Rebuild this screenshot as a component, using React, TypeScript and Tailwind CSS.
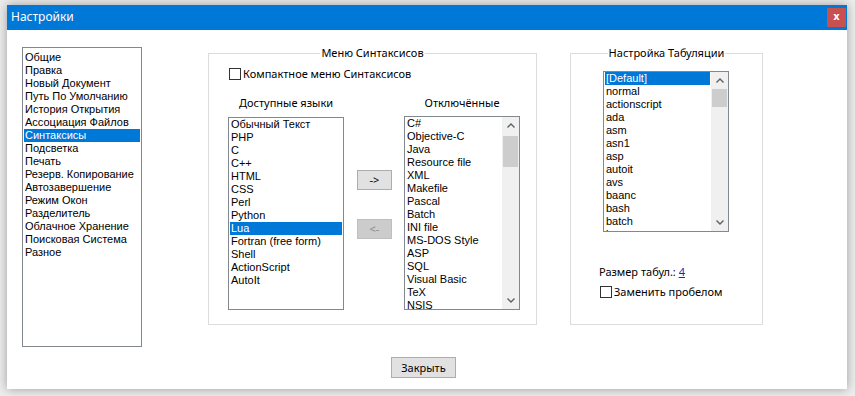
import React from "react";

const UI = "font-['Noto_Sans',sans-serif] text-[11px] leading-[16px] text-black";
const LIST = "font-['Liberation_Sans',Arial,sans-serif] text-[11px] leading-[13px] text-black";

const categories = [
  "Общие",
  "Правка",
  "Новый Документ",
  "Путь По Умолчанию",
  "История Открытия",
  "Ассоциация Файлов",
  "Синтаксисы",
  "Подсветка",
  "Печать",
  "Резерв. Копирование",
  "Автозавершение",
  "Режим Окон",
  "Разделитель",
  "Облачное Хранение",
  "Поисковая Система",
  "Разное",
];

const available = [
  "Обычный Текст",
  "PHP",
  "C",
  "C++",
  "HTML",
  "CSS",
  "Perl",
  "Python",
  "Lua",
  "Fortran (free form)",
  "Shell",
  "ActionScript",
  "AutoIt",
];

const disabled = [
  "C#",
  "Objective-C",
  "Java",
  "Resource file",
  "XML",
  "Makefile",
  "Pascal",
  "Batch",
  "INI file",
  "MS-DOS Style",
  "ASP",
  "SQL",
  "Visual Basic",
  "TeX",
  "NSIS",
];

const tabLexers = [
  "[Default]",
  "normal",
  "actionscript",
  "ada",
  "asm",
  "asn1",
  "asp",
  "autoit",
  "avs",
  "baanc",
  "bash",
  "batch",
  "bc",
];

function Chevron({ down }: { down?: boolean }) {
  return (
    <svg width="8" height="5" viewBox="0 0 8 5" className={down ? "rotate-180" : ""}>
      <polyline points="0.5,4.5 4,1 7.5,4.5" fill="none" stroke="#606060" strokeWidth="1.4" />
    </svg>
  );
}

function ScrollBar({ thumbTop, thumbHeight }: { thumbTop: number; thumbHeight: number }) {
  return (
    <div className="w-[17px] shrink-0 bg-[#f0f0f0] flex flex-col">
      <div className="h-[17px] flex items-center justify-center">
        <Chevron />
      </div>
      <div className="flex-1 px-[1px]">
        <div className="bg-[#cdcdcd]" style={{ marginTop: thumbTop, height: thumbHeight }} />
      </div>
      <div className="h-[17px] flex items-center justify-center">
        <Chevron down />
      </div>
    </div>
  );
}

function ListBox({
  items,
  selected,
  className,
  padTop = 0,
  scroll,
}: {
  items: string[];
  selected?: number;
  className: string;
  padTop?: number;
  scroll?: { top: number; height: number };
}) {
  return (
    <div className={`border border-[#828790] bg-white flex overflow-hidden ${className}`}>
      <div className={`flex-1 overflow-hidden px-[1px] ${LIST}`} style={{ paddingTop: padTop }}>
        {items.map((it, i) => (
          <div
            key={it}
            className={`h-[13px] px-[1px] whitespace-nowrap ${i === selected ? "bg-[#0078d7] text-white" : ""}`}
          >
            {it}
          </div>
        ))}
      </div>
      {scroll && <ScrollBar thumbTop={scroll.top} thumbHeight={scroll.height} />}
    </div>
  );
}

function CheckBox({ label }: { label: string }) {
  return (
    <div className={`flex items-center gap-[2px] ${UI}`}>
      <div className="w-[12px] h-[12px] border border-[#333333] bg-white" />
      <span>{label}</span>
    </div>
  );
}

function PushButton({ label, disabled }: { label: string; disabled?: boolean }) {
  return (
    <div
      className={`h-[20px] w-[35px] flex items-center justify-center border ${UI} ${
        disabled ? "bg-[#cccccc] border-[#bfbfbf] !text-[#8a8a8a]" : "bg-[#e1e1e1] border-[#adadad]"
      }`}
    >
      {label}
    </div>
  );
}

export default function App() {
  return (
    <div className="min-h-screen w-full bg-[#ededed] pl-[7px] pt-[5px]">
      <div className="w-[840px] h-[384px] bg-white flex flex-col shadow-[0_0_10px_rgba(0,0,0,0.35)]">
        {/* title bar */}
        <div className="h-[25px] bg-[#0078d7] flex items-start justify-between">
          <span className="font-['Noto_Sans',sans-serif] text-[12px] leading-[16px] text-white ml-[4px] mt-[4px]">
            Настройки
          </span>
          <div className="w-[19px] h-[19px] mt-[3px] mr-[1px] bg-[#c75050] flex items-center justify-center font-['DejaVu_Sans',sans-serif] text-[10px] font-bold leading-none text-white pb-[2px]">
            x
          </div>
        </div>

        <div className="flex items-start pl-[15px] pt-[17px]">
          <ListBox items={categories} selected={6} className="w-[120px] h-[300px]" padTop={3} />

          {/* syntax menu */}
          <fieldset className="ml-[66px] -mt-[2px] w-[329px] h-[280px] border border-[#dcdcdc]">
            <legend className={`mx-auto px-[1px] ${UI}`}>Меню Синтаксисов</legend>
            <div className="pl-[19px] flex flex-col">
              <div className="mt-[5px] ml-[1px]">
                <CheckBox label="Компактное меню Синтаксисов" />
              </div>
              <div className="mt-[13px] flex items-start">
                <div className="w-[116px] flex flex-col items-center">
                  <span className={UI}>Доступные языки</span>
                  <ListBox items={available} selected={8} className="mt-[6px] w-[116px] h-[193px]" />
                </div>
                <div className="ml-[13px] pt-[75px] flex flex-col gap-[29px]">
                  <PushButton label="->" />
                  <PushButton label="<-" disabled />
                </div>
                <div className="ml-[12px] w-[116px] flex flex-col items-center">
                  <span className={UI}>Отключённые</span>
                  <ListBox
                    items={disabled}
                    className="mt-[5px] w-[116px] h-[194px]"
                    scroll={{ top: 2, height: 31 }}
                  />
                </div>
              </div>
            </div>
          </fieldset>

          {/* tab settings */}
          <fieldset className="ml-[33px] -mt-[2px] w-[193px] h-[280px] border border-[#dcdcdc]">
            <legend className={`mx-auto px-[1px] ${UI}`}>Настройка Табуляции</legend>
            <div className="pl-[28px] flex flex-col items-start">
              <ListBox
                items={tabLexers}
                selected={0}
                className="ml-[4px] mt-[10px] w-[126px] h-[161px]"
                scroll={{ top: 0, height: 18 }}
              />
              <div className={`mt-[32px] ${UI}`}>
                Размер табул.: <span className="text-[#2222cc] underline">4</span>
              </div>
              <div className="mt-[4px] ml-[1px]">
                <CheckBox label="Заменить пробелом" />
              </div>
            </div>
          </fieldset>
        </div>

        <div className="mt-[10px] flex justify-center">
          <div
            className={`mr-[7px] w-[65px] h-[21px] bg-[#e1e1e1] border border-[#adadad] flex items-center justify-center ${UI}`}
          >
            Закрыть
          </div>
        </div>
      </div>
    </div>
  );
}
